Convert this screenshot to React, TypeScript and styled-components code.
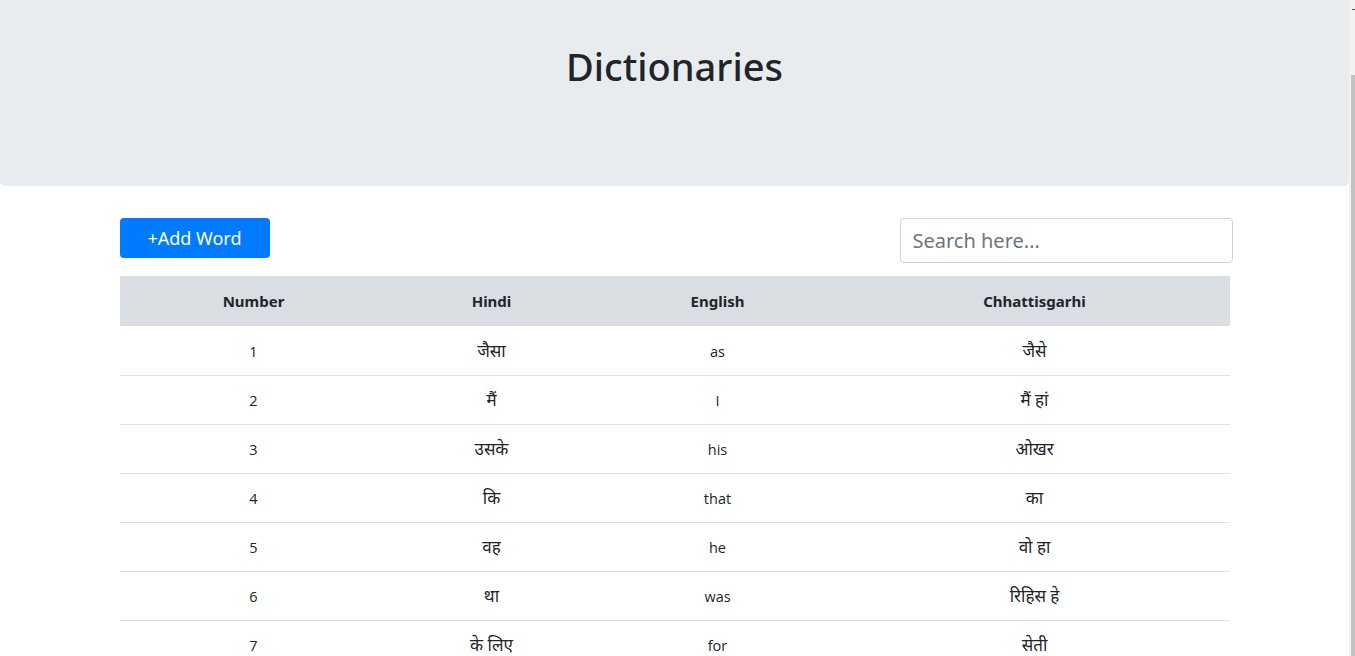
import React from "react";
import styled, { createGlobalStyle } from "styled-components";

const GlobalStyle = createGlobalStyle`
  html, body { margin: 0; padding: 0; overflow: hidden; background: #fff; }
  body {
    font-family: "Noto Sans", "Open Sans", sans-serif;
    color: #212529;
  }
  * { box-sizing: border-box; }
`;

const Page = styled.div`
  display: flex;
  width: 1355px;
  height: 656px;
  overflow: hidden;
`;

const Main = styled.div`
  width: 1349px;
  flex: none;
`;

const ScrollTrack = styled.div`
  width: 6px;
  flex: none;
  height: 656px;
  background: #f1f1f1;
  display: flex;
  flex-direction: column;
  align-items: flex-end;
`;

const ScrollArrow = styled.div`
  height: 75px;
  width: 6px;
  padding-top: 9px;
  display: flex;
  justify-content: flex-end;
  &::after {
    content: "";
    width: 3px;
    height: 1px;
    background: #505050;
  }
`;

const ScrollThumb = styled.div`
  width: 4px;
  flex: 1;
  background: #c1c1c1;
`;

const Jumbotron = styled.header`
  height: 186px;
  background: #e9ecef;
  border-radius: 0 0 5px 5px;
  padding-top: 44px;
  text-align: center;
`;

const Title = styled.h1`
  margin: 0;
  font-size: 38px;
  font-weight: 500;
  line-height: 1.2;
  color: #212529;
`;

const Container = styled.main`
  width: 1110px;
  margin: 32px auto 0;
`;

const Toolbar = styled.div`
  display: flex;
  justify-content: space-between;
  align-items: flex-start;
  margin-bottom: 13px;
`;

const AddButton = styled.button`
  width: 150px;
  height: 40px;
  border: none;
  border-radius: 4px;
  background: #007bff;
  color: #fff;
  font-family: inherit;
  font-size: 18px;
  padding: 0;
  cursor: pointer;
`;

const SearchInput = styled.input`
  width: 333px;
  height: 45px;
  margin-right: -3px;
  border: 1px solid #ced4da;
  border-radius: 4px;
  padding: 0 12px;
  font-family: inherit;
  font-size: 20px;
  color: #495057;
  &::placeholder { color: #6c757d; }
`;

const Table = styled.table`
  width: 1110px;
  border-collapse: collapse;
  table-layout: fixed;
`;

const HeadCell = styled.th<{ $w: number }>`
  width: ${(p) => p.$w}px;
  height: 50px;
  background: #dadde1;
  font-size: 15px;
  font-weight: 700;
  text-align: center;
  vertical-align: middle;
  padding: 0;
`;

const Row = styled.tr`
  border-bottom: 1px solid #dee2e6;
`;

const Cell = styled.td<{ $hindi?: boolean }>`
  height: 49px;
  text-align: center;
  vertical-align: middle;
  padding: ${(p) => (p.$hindi ? "0" : "2px 0 0")};
  font-family: ${(p) => (p.$hindi ? "inherit" : '"Open Sans", "Noto Sans", sans-serif')};
  font-size: ${(p) => (p.$hindi ? "17px" : "14.5px")};
  font-weight: 400;
  color: #212529;
`;

const columns = [
  { label: "Number", w: 268 },
  { label: "Hindi", w: 208 },
  { label: "English", w: 244 },
  { label: "Chhattisgarhi", w: 390 },
];

const words = [
  ["जैसा", "as", "जैसे"],
  ["मैं", "I", "मैं हां"],
  ["उसके", "his", "ओखर"],
  ["कि", "that", "का"],
  ["वह", "he", "वो हा"],
  ["था", "was", "रिहिस हे"],
  ["के लिए", "for", "सेती"],
];

export default function App() {
  return (
    <Page>
      <GlobalStyle />
      <Main>
        <Jumbotron>
          <Title>Dictionaries</Title>
        </Jumbotron>
        <Container>
          <Toolbar>
            <AddButton>+Add Word</AddButton>
            <SearchInput placeholder="Search here..." />
          </Toolbar>
          <Table>
            <thead>
              <tr>
                {columns.map((c) => (
                  <HeadCell key={c.label} $w={c.w}>
                    {c.label}
                  </HeadCell>
                ))}
              </tr>
            </thead>
            <tbody>
              {words.map(([hi, en, ch], i) => (
                <Row key={i}>
                  <Cell>{i + 1}</Cell>
                  <Cell $hindi>{hi}</Cell>
                  <Cell>{en}</Cell>
                  <Cell $hindi>{ch}</Cell>
                </Row>
              ))}
            </tbody>
          </Table>
        </Container>
      </Main>
      <ScrollTrack>
        <ScrollArrow />
        <ScrollThumb />
      </ScrollTrack>
    </Page>
  );
}
